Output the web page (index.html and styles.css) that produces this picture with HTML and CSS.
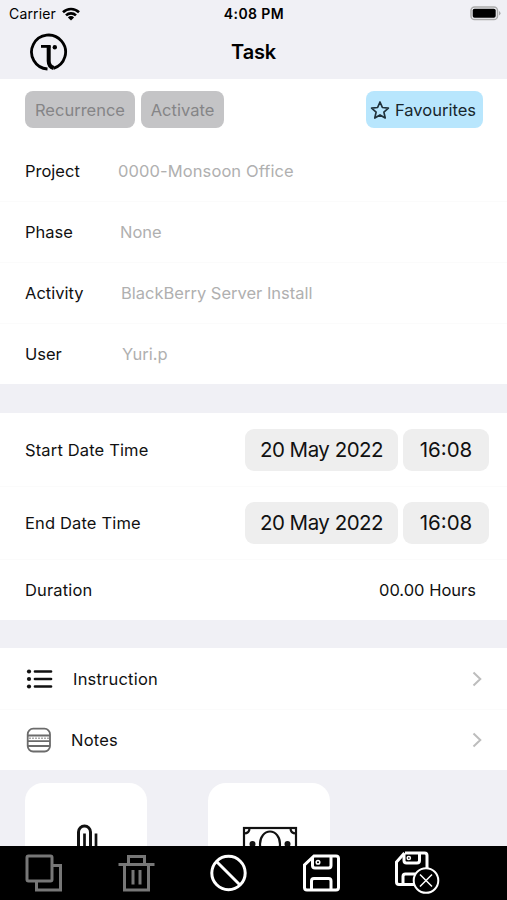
FILE: index.html
```html
<!DOCTYPE html>
<html lang="en">

<head>
    <meta charset="UTF-8">
    <title>Task</title>
    <link rel="stylesheet" href="styles.css">
</head>

<body>
    <header class="header">
        <div class="status-bar">
            <div class="carrier">
                <span>Carrier</span>
                <svg class="wifi" viewBox="0 0 18 14" width="18" height="14">
                    <g fill="none" stroke="#000" stroke-width="2.6">
                        <path d="M1 5.2a11.6 11.6 0 0 1 16 0" />
                        <path d="M4 8.4a7.2 7.2 0 0 1 10 0" />
                    </g>
                    <path d="M5.9 10.4a4.4 4.4 0 0 1 6.2 0L9 13.5z" />
                </svg>
            </div>
            <span class="clock">4:08 PM</span>
            <svg class="battery" viewBox="0 0 31 15" width="31" height="15">
                <rect x="1" y="1" width="26.5" height="12.5" rx="3.6" fill="none" stroke="#aaaaab" stroke-width="1.5" />
                <rect x="2.7" y="2.7" width="23" height="9.1" rx="1.8" />
                <path d="M29 5v4.5q1.5-.8 1.5-2.25T29 5z" fill="#aaaaab" />
            </svg>
        </div>
        <div class="title-bar">
            <svg class="logo" viewBox="0 0 38 38" width="38" height="38">
                <g fill="none" stroke="#000" stroke-width="2.8">
                    <path d="M17.500 36A17 17 0 1 1 23.500 35.300" />
                    <path d="M11 13.400h9.500" />
                    <path d="M18.700 12.500V28q0 5.500 5 7" stroke-width="4" />
                </g>
                <circle cx="24.800" cy="14.300" r="2.200" />
            </svg>
            <h1>Task</h1>
        </div>
    </header>

    <main class="content">
        <section class="group form">
            <div class="actions">
                <button class="btn recurrence">Recurrence</button>
                <button class="btn activate">Activate</button>
                <button class="btn favourites">
                    <svg viewBox="0 0 20 20" width="20" height="20">
                        <path d="M10 2l2.4 5.5 6 .6-4.500 4 1.300 5.900-5.200-3.100L4.800 18l1.300-5.900-4.500-4 6-.6z" fill="none" stroke="#20323b" stroke-width="1.7" stroke-linejoin="round" />
                    </svg>
                    <span>Favourites</span>
                </button>
            </div>
            <div class="row">
                <span class="label">Project</span>
                <span class="value project">0000-Monsoon Office</span>
            </div>
            <div class="row">
                <span class="label">Phase</span>
                <span class="value phase">None</span>
            </div>
            <div class="row">
                <span class="label">Activity</span>
                <span class="value activity">BlackBerry Server Install</span>
            </div>
            <div class="row">
                <span class="label">User</span>
                <span class="value user">Yuri.p</span>
            </div>
        </section>

        <section class="group">
            <div class="row date-row">
                <span class="date-label">Start Date Time</span>
                <span class="pill date">20 May 2022</span>
                <span class="pill time">16:08</span>
            </div>
            <div class="row date-row">
                <span class="date-label">End Date Time</span>
                <span class="pill date">20 May 2022</span>
                <span class="pill time">16:08</span>
            </div>
            <div class="row duration-row">
                <span class="duration">Duration</span>
                <span class="hours">00.00 Hours</span>
            </div>
        </section>

        <section class="group">
            <div class="row link-row">
                <svg viewBox="0 0 28 26" width="28" height="26">
                    <g stroke="#111" stroke-width="2.7" stroke-linecap="round">
                        <path d="M10 5.500h16M10 13h16M10 20.500h16" />
                    </g>
                    <g fill="#111">
                        <circle cx="4" cy="5.5" r="2.1" />
                        <circle cx="4" cy="13" r="2.1" />
                        <circle cx="4" cy="20.5" r="2.1" />
                    </g>
                </svg>
                <span class="link-text instruction">Instruction</span>
                <svg class="chevron" viewBox="0 0 10 16" width="10" height="16">
                    <path d="M1.500 1.500L8.300 8l-6.800 6.500" />
                </svg>
            </div>
            <div class="row link-row">
                <svg viewBox="0 0 28 26" width="28" height="26">
                    <g fill="none" stroke="#6b6b6b" stroke-width="1.8">
                        <rect x="2.7" y="1.7" width="22.3" height="22.8" rx="5.5" />
                        <path d="M3 8.500h22M3 14.200h22M3 19h22" />
                        <path d="M4 11.300h20" stroke="#aaa" stroke-width="1.5" stroke-dasharray="2 1" />
                    </g>
                </svg>
                <span class="link-text notes">Notes</span>
                <svg class="chevron" viewBox="0 0 10 16" width="10" height="16">
                    <path d="M1.500 1.500L8.300 8l-6.800 6.500" />
                </svg>
            </div>
        </section>

        <div class="cards">
            <div class="card">
                <!-- paperclip -->
                <svg viewBox="0 0 24 50" width="24" height="50">
                    <g fill="none" stroke="#111" stroke-width="3">
                        <path d="M4.500 45V8a6 6 0 0 1 12 0v29" />
                        <path d="M10.500 34V9.500M22 9.500v30" stroke-width="2.7" />
                    </g>
                </svg>
            </div>
            <div class="card note">
                <!-- bank note -->
                <svg viewBox="0 0 56 36" width="56" height="36">
                    <g fill="none" stroke="#111" stroke-width="2.2">
                        <rect x="2" y="2" width="52" height="32" />
                        <ellipse cx="28" cy="18" rx="10" ry="12.5" />
                        <path d="M2 7.500q5.500 0 5.500-5.500M54 7.500q-5.500 0-5.500-5.500" />
                    </g>
                    <circle cx="10.500" cy="18" r="3" fill="#111" />
                    <circle cx="45.500" cy="18" r="3" fill="#111" />
                </svg>
            </div>
        </div>
    </main>

    <footer class="toolbar">
        <svg class="disabled" viewBox="0 0 38 38" width="38" height="38">
            <rect x="2" y="2" width="25" height="25" rx="1.5" />
            <path d="M27.500 11.500H35.500V36H11.500V27" />
        </svg>
        <svg class="disabled" viewBox="0 0 38 38" width="38" height="38">
            <path d="M.5 10.500h36M10.500 10V2.500h16V10M6.500 10.500V36h24V10.500" />
            <path d="M15 16v14.500M22 16v14.500" />
        </svg>
        <svg viewBox="0 0 38 38" width="38" height="38">
            <circle cx="18.5" cy="19" r="16.7" />
            <path d="M6.500 7.500l23.500 23.500" />
        </svg>
        <svg viewBox="0 0 38 38" width="38" height="38">
            <path d="M11 2h22q2.500 0 2.500 2.500v29q0 2.500-2.500 2.500H4Q1.500 36 1.500 33.500V11z" />
            <path d="M9.500 4v7.500q0 2.500 2.500 2.500h13.500q2.500 0 2.500-2.500V2.500" />
            <path d="M8.500 36V27q0-2.500 2.500-2.500h14.500q2.500 0 2.500 2.500v9" />
            <circle class="dot" cx="15" cy="8.2" r="1.8" />
        </svg>
        <svg viewBox="0 0 46 46" width="46" height="46">
            <path d="M10 3h19.500q2.500 0 2.500 2.500v19M20 34.500H4Q1.500 34.500 1.500 32V12l8-9" />
            <path d="M9 4v6.500q0 2.500 2.500 2.500H22q2.500 0 2.500-2.500V3" />
            <path d="M8 34.500v-8q0-2.500 2.500-2.500h10" />
            <circle class="dot" cx="13.8" cy="8" r="1.6" />
            <circle class="cancel" cx="31" cy="30.5" r="12.3" />
            <path class="cross" d="M25 24.500l12 12M37 24.500l-12 12" />
        </svg>
    </footer>
</body>

</html>
```

FILE: styles.css
```css
* {
    margin: 0;
    padding: 0;
    box-sizing: border-box;
}

body {
    height: 900px;
    display: flex;
    flex-direction: column;
    overflow: hidden;
    background: #f0f0f5;
    color: #111;
    font-family: Inter, "Liberation Sans", sans-serif;
    font-size: 16.5px;
}

svg {
    display: block;
    flex-shrink: 0;
}

.header {
    height: 79px;
    flex-shrink: 0;
    color: #000;
}

.status-bar {
    height: 27px;
    padding: 0 6px 0 9px;
    display: grid;
    grid-template-columns: 1fr auto 1fr;
    align-items: center;
    font-size: 14px;
}

.carrier {
    display: flex;
    align-items: center;
    gap: 6px;
    letter-spacing: 0.15px;
}

.clock {
    font-weight: 600;
    letter-spacing: 0.4px;
    margin-right: 2px;
}

.battery {
    justify-self: end;
}

.title-bar {
    height: 50px;
    padding: 0 30px;
    display: grid;
    grid-template-columns: 1fr auto 1fr;
    align-items: center;
}

.title-bar h1 {
    font-size: 20px;
    font-weight: 600;
    letter-spacing: -0.2px;
}

.content {
    flex: 1;
    min-height: 0;
    overflow: hidden;
}

.group {
    margin-bottom: 28px;
    background: #fff;
}

.form {
    margin-bottom: 29px;
}

.actions {
    height: 61px;
    padding: 0 24px 0 25px;
    display: flex;
    align-items: center;
    gap: 6px;
}

.btn {
    height: 37px;
    border: none;
    border-radius: 8px;
    background: #c4c4c6;
    color: #858587;
    font-family: inherit;
    font-size: 16.5px;
}

.recurrence {
    width: 110px;
}

.activate {
    width: 83px;
}

.favourites {
    width: 117px;
    padding-right: 3px;
    margin-left: auto;
    display: flex;
    align-items: center;
    justify-content: center;
    gap: 5px;
    background: #b8e6fd;
    color: #17262d;
}

.row {
    height: 61px;
    padding: 0 25px;
    display: flex;
    align-items: center;
}

.row + .row {
    border-top: 1px solid #fbfbfb;
}

.label {
    width: 93px;
}

.value {
    color: #b0b0b0;
}

.project {
    letter-spacing: 0.1px;
}

.phase {
    margin-left: 2px;
}

.activity {
    margin-left: 3px;
}

.user {
    margin-left: 4px;
}

.date-row {
    height: 73px;
    padding-right: 18px;
    gap: 5px;
}

.date-label {
    flex: 1;
    letter-spacing: 0.15px;
}

.pill {
    height: 42px;
    border-radius: 9px;
    background: #eee;
    font-size: 20.5px;
    line-height: 42px;
    text-align: center;
}

.date {
    width: 153px;
    letter-spacing: -0.5px;
}

.time {
    width: 86px;
}

.duration-row {
    justify-content: space-between;
    padding-right: 31px;
}

.duration {
    letter-spacing: 0.15px;
}

.link-row {
    padding-right: 25px;
}

.link-text {
    flex: 1;
    letter-spacing: 0.2px;
}

.instruction {
    margin-left: 20px;
}

.notes {
    margin-left: 18px;
}

.chevron path {
    fill: none;
    stroke: #bdbdbd;
    stroke-width: 2;
}

.cards {
    margin-top: -15px;
    padding-left: 25px;
    display: flex;
    gap: 61px;
}

.card {
    width: 122px;
    height: 122px;
    padding-top: 41px;
    display: flex;
    justify-content: center;
    border-radius: 18px;
    background: #fff;
}

.note {
    padding-top: 43px;
    padding-left: 1px;
}

.toolbar {
    height: 54px;
    flex-shrink: 0;
    padding-left: 25px;
    display: flex;
    align-items: center;
    gap: 54.5px;
    background: #000;
}

.toolbar svg {
    fill: none;
    stroke: #fff;
    stroke-width: 3;
}

.toolbar .disabled {
    stroke: #777;
}

.toolbar .dot {
    stroke-width: 1.5;
}

.toolbar .cancel {
    fill: #000;
    stroke-width: 2;
}

.toolbar .cross {
    stroke-width: 1.5;
}
```
